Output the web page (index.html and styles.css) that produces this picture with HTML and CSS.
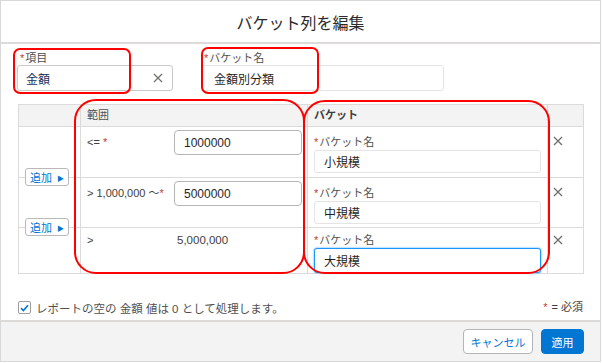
FILE: index.html
```html
<!DOCTYPE html>
<html lang="ja">
<head>
  <meta charset="UTF-8">
  <title>バケット列を編集</title>
  <link rel="stylesheet" href="styles.css">
</head>
<body>

  <div class="modal">
    <header class="modal-header">
      <h2>バケット列を編集</h2>
    </header>

    <div class="modal-body">
      <div class="fields">
        <div class="field field-item">
          <label><span class="req">*</span>項目</label>
          <div class="input lookup">
            <span class="lookup-value">金額</span>
            <svg class="x-icon" width="10" height="10" viewBox="0 0 10 10"><path d="M1 1 L9 9 M9 1 L1 9" stroke="#706e6b" stroke-width="1.2"/></svg>
          </div>
        </div>
        <div class="field field-name">
          <label><span class="req">*</span>バケット名</label>
          <div class="input soft">金額別分類</div>
        </div>
      </div>

      <div class="bucket-table">
        <div class="th"></div>
        <div class="th">範囲</div>
        <div class="th th-strong">バケット</div>
        <div class="th"></div>

        <div class="td add-cell"><button class="add-btn">追加 <span class="tri">▶</span></button></div>
        <div class="td range">
          <span class="op">&lt;= <span class="req">*</span></span>
          <div class="input num">1000000</div>
        </div>
        <div class="td bucket">
          <label><span class="req">*</span>バケット名</label>
          <div class="input soft">小規模</div>
        </div>
        <div class="td del"><svg width="10" height="10" viewBox="0 0 10 10"><path d="M1 1 L9 9 M9 1 L1 9" stroke="#706e6b" stroke-width="1.3"/></svg></div>

        <div class="td add-cell"><button class="add-btn">追加 <span class="tri">▶</span></button></div>
        <div class="td range">
          <span class="op">&gt; 1,000,000 ～<span class="req">*</span></span>
          <div class="input num">5000000</div>
        </div>
        <div class="td bucket">
          <label><span class="req">*</span>バケット名</label>
          <div class="input soft">中規模</div>
        </div>
        <div class="td del"><svg width="10" height="10" viewBox="0 0 10 10"><path d="M1 1 L9 9 M9 1 L1 9" stroke="#706e6b" stroke-width="1.3"/></svg></div>

        <div class="td"></div>
        <div class="td range last">
          <span class="op">&gt;</span>
          <span class="fixed">5,000,000</span>
        </div>
        <div class="td bucket last">
          <label><span class="req">*</span>バケット名</label>
          <div class="input soft focus">大規模</div>
        </div>
        <div class="td del last"><svg width="10" height="10" viewBox="0 0 10 10"><path d="M1 1 L9 9 M9 1 L1 9" stroke="#706e6b" stroke-width="1.3"/></svg></div>
      </div>

      <div class="options">
        <span class="checkbox"><svg width="9" height="8" viewBox="0 0 9 8"><path d="M1 4.2 L3.4 6.5 L8 1.2" fill="none" stroke="#0176d3" stroke-width="1.6"/></svg></span>
        <span class="opt-text">レポートの空の 金額 値は 0 として処理します。</span>
        <span class="legend"><span class="req">*</span> = 必須</span>
      </div>
    </div>

    <footer class="modal-footer">
      <button class="btn btn-neutral">キャンセル</button>
      <button class="btn btn-brand">適用</button>
    </footer>

    <!-- annotation marks -->
    <div class="mark mark-1"></div>
    <div class="mark mark-2"></div>
    <div class="mark mark-3"></div>
    <div class="mark mark-4"></div>
  </div>

</body>
</html>
```

FILE: styles.css
```css
* {
  margin: 0;
  padding: 0;
  box-sizing: border-box;
}

body {
  background: #fff;
  font-family: "Liberation Sans", "Noto Sans CJK JP", sans-serif;
  color: #3e3e3c;
  font-size: 12px;
}

.modal {
  position: relative;
  width: 601px;
  height: 362px;
  border: 1px solid #d8d8d8;
  background: #fff;
  display: flex;
  flex-direction: column;
}

.modal-header {
  flex-shrink: 0;
  height: 43px;
  border-bottom: 2px solid #dddbda;
  display: flex;
  align-items: center;
  justify-content: center;
  padding-top: 1px;
}

.modal-header h2 {
  font-size: 16px;
  font-weight: 400;
  color: #2b2b2b;
}

.modal-body {
  flex: 1;
  padding: 7px 17px 0 16px;
}

.req {
  color: #c23934;
  margin-right: 1px;
}

label {
  display: block;
  font-size: 11px;
  line-height: 14px;
  color: #514f4d;
}

.fields {
  display: flex;
  gap: 28px;
}

.field label {
  padding-left: 3px;
}

.input {
  display: flex;
  align-items: center;
  background: #fff;
  border: 1px solid #c9c9c9;
  border-radius: 3px;
  padding: 0 9px;
  font-size: 12px;
  color: #1f1f1f;
}

.input.soft {
  border-color: #e4e4e4;
}

.field-item .input {
  width: 156px;
  height: 26px;
  justify-content: space-between;
  padding: 0 9px 0 8px;
}

.lookup-value {
  color: #16325c;
}

.field-name .input {
  width: 243px;
  height: 26px;
  padding: 0 12px;
}

.bucket-table {
  margin-top: 13px;
  margin-left: 1px;
  width: 566px;
  border: 1px solid #dddbda;
  display: grid;
  grid-template-columns: 61px 227px 240px 1fr;
  grid-template-rows: 21px 51px 50px 46px;
}

.th {
  background: #f3f3f3;
  border-left: 1px solid #dddbda;
  font-size: 11px;
  line-height: 21px;
  padding-left: 6px;
  color: #514f4d;
}

.th:first-child {
  border-left: none;
}

.th-strong {
  font-weight: 700;
  color: #3e3e3c;
}

.td {
  border-top: 1px solid #dddbda;
  border-left: 1px solid #dddbda;
}

.td:nth-child(4n+1) {
  border-left: none;
}

.add-cell {
  position: relative;
}

.add-btn {
  position: absolute;
  left: 6px;
  bottom: -9px;
  width: 44px;
  height: 18px;
  background: #fff;
  border: 1px solid #b9b9b9;
  border-radius: 3px;
  color: #0176d3;
  font-family: inherit;
  font-size: 11px;
  z-index: 1;
}

.tri {
  font-size: 7px;
  vertical-align: 1px;
  margin-left: 2px;
}

.range {
  display: flex;
  align-items: flex-start;
  padding: 3px 0 0 6px;
}

.range.last {
  padding-top: 0;
}

.op {
  width: 87px;
  line-height: 24px;
  font-size: 11px;
  white-space: nowrap;
}

.input.num {
  width: 128px;
  height: 25px;
  border-color: #b5b5b5;
  border-radius: 4px;
}

.fixed {
  line-height: 24px;
  margin-left: 3px;
  font-size: 11.5px;
}

.bucket {
  padding: 8px 0 0 6px;
}

.bucket.last {
  padding-top: 5px;
}

.bucket label {
  margin-bottom: 1px;
}

.bucket .input {
  width: 227px;
  height: 23px;
}

.bucket .input.focus {
  height: 25px;
  border-color: #1b96ff;
  box-shadow: 0 0 2px #1b96ff;
}

.del {
  padding: 8px 0 0 5px;
}

.del.last {
  padding-top: 6px;
}

.options {
  display: flex;
  align-items: center;
  height: 13px;
  margin-top: 27px;
  margin-left: 1px;
  font-size: 11.5px;
}

.checkbox {
  width: 13px;
  height: 13px;
  border: 1px solid #9e9e9e;
  border-radius: 2px;
  display: flex;
  align-items: center;
  justify-content: center;
  margin-right: 5px;
}

.opt-text {
  flex: 1;
  color: #514f4d;
}

.legend {
  font-size: 11px;
  margin-top: -4px;
  color: #3e3e3c;
}

.modal-footer {
  flex-shrink: 0;
  height: 41px;
  border-top: 2px solid #dddbda;
  background: #f3f3f3;
  display: flex;
  align-items: center;
  justify-content: flex-end;
  gap: 8px;
  padding-right: 16px;
}

.btn {
  height: 25px;
  border-radius: 4px;
  font-family: inherit;
  font-size: 11px;
}

.btn-neutral {
  width: 70px;
  background: #fff;
  border: 1px solid #b5b5b5;
  color: #0176d3;
}

.btn-brand {
  width: 43px;
  background: #0176d3;
  border: 1px solid #0176d3;
  color: #fff;
}

.mark {
  position: absolute;
  border: 2px solid #ff0000;
  pointer-events: none;
}

.mark-1 {
  left: 12px;
  top: 47px;
  width: 118px;
  height: 46px;
  border-radius: 7px;
}

.mark-2 {
  left: 200px;
  top: 46px;
  width: 118px;
  height: 47px;
  border-radius: 7px;
}

.mark-3 {
  left: 73px;
  top: 98px;
  width: 231px;
  height: 175px;
  border-radius: 22px;
}

.mark-4 {
  left: 302px;
  top: 99px;
  width: 247px;
  height: 174px;
  border-radius: 22px;
}
```
